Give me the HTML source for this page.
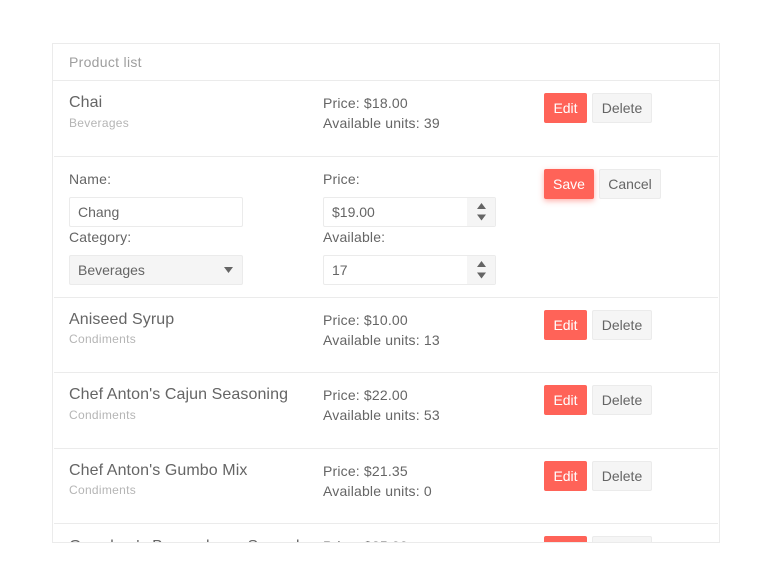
<!DOCTYPE html>
<html><head><meta charset="utf-8">
<style>
html,body{margin:0;padding:0;background:#fff;width:770px;height:586px;overflow:hidden}
body{font-family:"Liberation Sans",sans-serif;color:#656565;position:relative}
.card{position:absolute;left:52px;top:43px;width:666px;height:498px;border:1px solid #ebebeb;overflow:hidden;background:#fff}
.a{position:absolute;white-space:nowrap}
.line{position:absolute;left:1px;width:664px;height:1px;background:#ebebeb}
.name{font-size:16px;line-height:20px;left:16px;color:#656565;letter-spacing:.09px}
.cat{font-size:12px;line-height:16px;left:16px;color:#b5b5b5;letter-spacing:.3px}
.t{font-size:14px;line-height:20px;letter-spacing:.18px}
.btn{position:absolute;height:30px;line-height:30px;text-align:center;font-size:14px;border-radius:2px;box-sizing:border-box}
.edit{left:491px;width:43px;background:#ff6358;color:#fff}
.del{left:539px;width:60px;background:#f5f5f5;border:1px solid #ebebeb;line-height:28px;color:#656565}
.in{position:absolute;box-sizing:border-box;height:30px;border:1px solid #ebebeb;border-radius:2px;background:#fff;font-size:14px;line-height:28px;padding-left:8px}
.spin{position:absolute;right:0;top:0;width:28px;height:28px;background:#f5f5f5}
</style></head><body>
<div class="card">
<div class="a t" style="left:16px;top:8px;color:#9e9e9e;letter-spacing:.3px">Product list</div>
<div class="line" style="top:36px;left:0;width:666px"></div>

<div class="a name" style="top:49px">Chai</div>
<div class="a cat" style="top:71px">Beverages</div>
<div class="a t" style="left:270px;top:49px">Price: $18.00</div>
<div class="a t" style="left:270px;top:69px">Available units: 39</div>
<div class="btn edit" style="top:49px">Edit</div>
<div class="btn del" style="top:49px">Delete</div>
<div class="line" style="top:112px"></div>

<div class="a t" style="left:16px;top:125px">Name:</div>
<div class="in" style="left:16px;top:153px;width:174px">Chang</div>
<div class="a t" style="left:16px;top:183px">Category:</div>
<div class="in" style="left:16px;top:211px;width:174px;background:#f5f5f5">Beverages
<svg class="a" style="left:153.500px;top:11px" width="9" height="6"><path d="M0 0H9L4.500 6Z" fill="#656565"/></svg></div>
<div class="a t" style="left:270px;top:125px">Price:</div>
<div class="in" style="left:270px;top:153px;width:173px">$19.00
<div class="spin"><svg class="a" style="left:9.500px;top:5px" width="9" height="18"><path d="M0 6L4.500 0L9 6ZM0 11.500H9L4.500 17.500Z" fill="#656565"/></svg></div></div>
<div class="a t" style="left:270px;top:183px">Available:</div>
<div class="in" style="left:270px;top:211px;width:173px">17
<div class="spin"><svg class="a" style="left:9.500px;top:5px" width="9" height="18"><path d="M0 6L4.500 0L9 6ZM0 11.500H9L4.500 17.500Z" fill="#656565"/></svg></div></div>
<div class="btn" style="left:491px;top:125px;width:50px;background:#ff6358;color:#fff;box-shadow:0 2px 6px rgba(255,99,88,.5)">Save</div>
<div class="btn" style="left:546px;top:125px;width:62px;background:#f5f5f5;border:1px solid #ebebeb;line-height:28px">Cancel</div>
<div class="line" style="top:253px"></div>

<div class="a name" style="top:266px">Aniseed Syrup</div>
<div class="a cat" style="top:287px">Condiments</div>
<div class="a t" style="left:270px;top:266px">Price: $10.00</div>
<div class="a t" style="left:270px;top:286px">Available units: 13</div>
<div class="btn edit" style="top:266px">Edit</div>
<div class="btn del" style="top:266px">Delete</div>
<div class="line" style="top:328px"></div>

<div class="a name" style="top:341px">Chef Anton's Cajun Seasoning</div>
<div class="a cat" style="top:363px">Condiments</div>
<div class="a t" style="left:270px;top:341px">Price: $22.00</div>
<div class="a t" style="left:270px;top:361px">Available units: 53</div>
<div class="btn edit" style="top:341px">Edit</div>
<div class="btn del" style="top:341px">Delete</div>
<div class="line" style="top:404px"></div>

<div class="a name" style="top:417px">Chef Anton's Gumbo Mix</div>
<div class="a cat" style="top:438px">Condiments</div>
<div class="a t" style="left:270px;top:417px">Price: $21.35</div>
<div class="a t" style="left:270px;top:437px">Available units: 0</div>
<div class="btn edit" style="top:417px">Edit</div>
<div class="btn del" style="top:417px">Delete</div>
<div class="line" style="top:479px"></div>

<div class="a name" style="top:493px">Grandma's Boysenberry Spread</div>
<div class="a t" style="left:270px;top:492px">Price: $25.00</div>
<div class="btn edit" style="top:492px">Edit</div>
<div class="btn del" style="top:492px">Delete</div>
</div>
</body></html>
